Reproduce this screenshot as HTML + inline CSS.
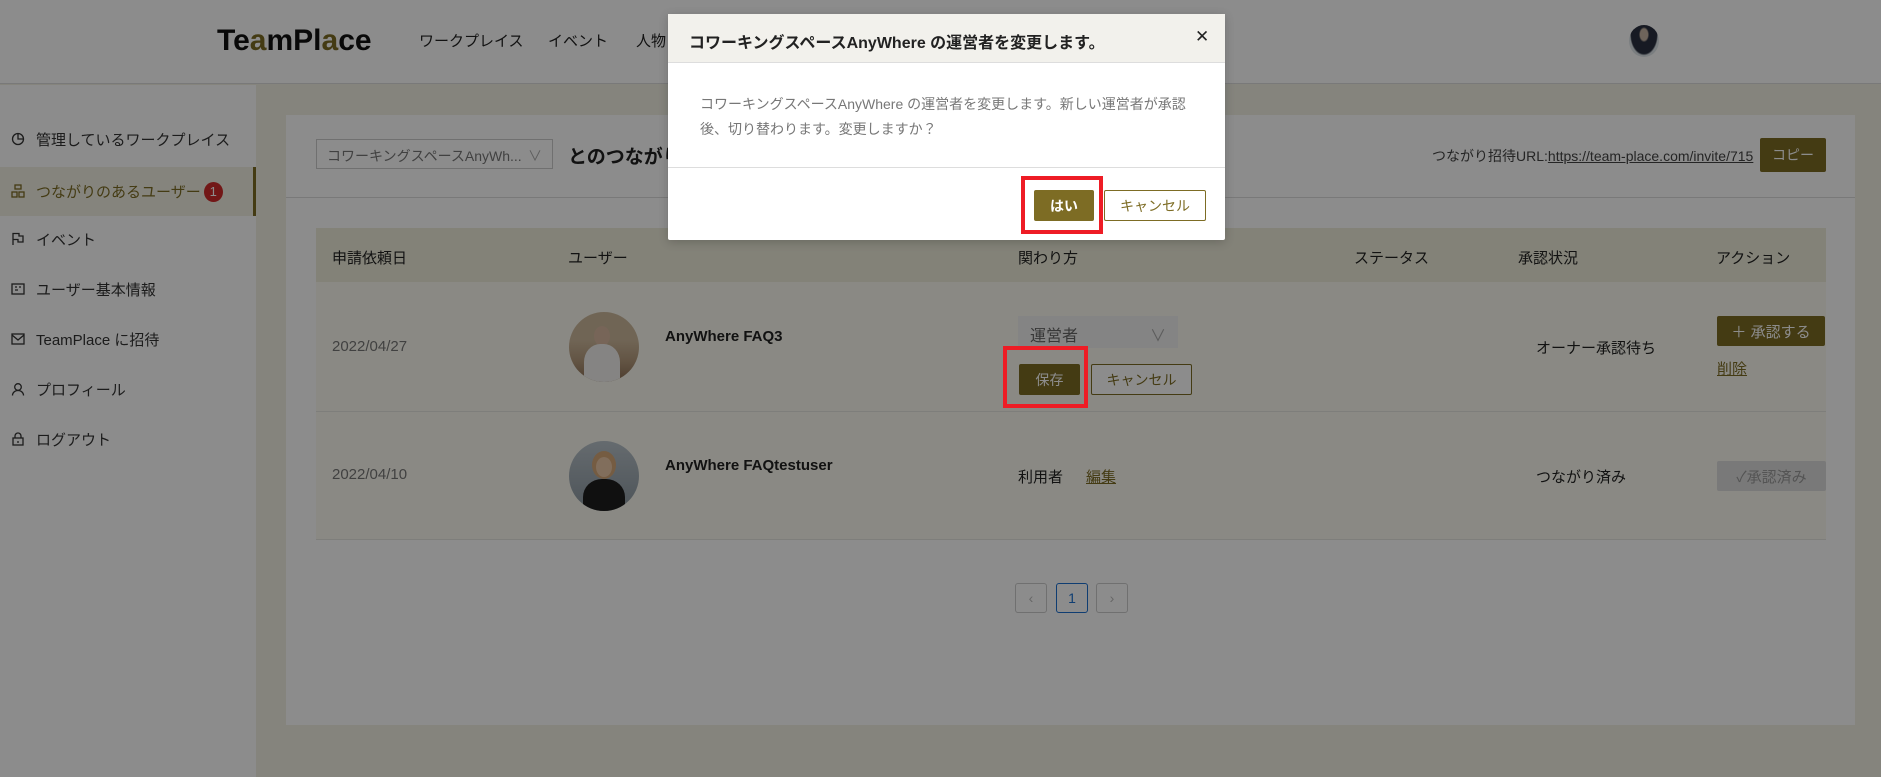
<!DOCTYPE html>
<html><head><meta charset="utf-8"><style>
*{box-sizing:border-box;margin:0;padding:0}
body{width:1881px;height:777px;position:relative;overflow:hidden;background:#f2f1e4;font-family:"Liberation Sans","Noto Sans CJK JP",sans-serif;color:#222}
.a{position:absolute}
.hdr{left:0;top:0;width:1881px;height:84px;background:#fff;border-bottom:1px solid #ddd}
.side{left:0;top:85px;width:256px;height:692px;background:#fff}
.si{position:absolute;left:0;width:256px;height:49px;font-size:15px;color:#333;display:flex;align-items:center;padding-left:36px}
.si svg{position:absolute;left:11px;top:17px}
.card{left:286px;top:115px;width:1569px;height:610px;background:#fff}
.btn{position:absolute;background:#7d6c24;color:#fff;font-size:14px;display:flex;align-items:center;justify-content:center;border-radius:2px}
.obtn{position:absolute;background:#fff;color:#7d6c24;border:1px solid #7d6c24;font-size:14px;display:flex;align-items:center;justify-content:center;border-radius:2px}
.th{font-size:15px;color:#222;top:247px}
.ov{left:0;top:0;width:1881px;height:777px;background:rgba(0,0,0,.45)}
.red{border:4px solid #ee1c25}
.pg{position:absolute;top:583px;width:32px;height:30px;border:1px solid #ccc;border-radius:3px;background:#fff;font-size:14px;color:#bbb;display:flex;align-items:center;justify-content:center}
</style></head><body>
<div class="a hdr"></div>
<div class="a" style="left:217px;top:24px;font-size:30px;font-weight:bold;letter-spacing:0px;color:#111">Te<span style="color:#7d6c24">a</span>mPl<span style="color:#7d6c24">a</span>ce</div>
<div class="a" style="left:419px;top:30px;font-size:15px">ワークプレイス</div>
<div class="a" style="left:548px;top:30px;font-size:15px">イベント</div>
<div class="a" style="left:636px;top:30px;font-size:15px">人物</div>
<div class="a" style="left:1629px;top:25px;width:30px;height:32px;border-radius:50%;background:radial-gradient(ellipse at 50% 30%,#c9b6a6 0 18%,#2a3140 24% 60%,#dfe5ea 66%)"></div>

<div class="a side">
 <div class="si" style="top:30px"><svg width="14" height="14" viewBox="0 0 14 14" fill="none" stroke="#333" stroke-width="1.3"><circle cx="7" cy="7" r="5.5"/><path d="M7 1.5V7H12.5"/></svg>管理しているワークプレイス</div>
 <div class="si" style="top:82px;background:#f2f1e4;color:#7d6c24;border-right:3px solid #7d6c24">
  <svg width="14" height="14" viewBox="0 0 14 14" fill="none" stroke="#7d6c24" stroke-width="1.3"><rect x="4" y="1" width="6" height="4"/><rect x="1" y="8" width="5" height="5"/><rect x="8" y="8" width="5" height="5"/></svg>つながりのあるユーザー<span style="display:inline-block;width:19px;height:20px;border-radius:50%;background:#d02a2a;color:#fff;font-size:13px;text-align:center;line-height:20px;margin-left:3px">1</span></div>
 <div class="si" style="top:130px"><svg width="14" height="14" viewBox="0 0 14 14" fill="none" stroke="#333" stroke-width="1.3"><path d="M2 13V1.5H8V4H12V10H7V7.5H2"/></svg>イベント</div>
 <div class="si" style="top:180px"><svg width="14" height="14" viewBox="0 0 14 14" fill="none" stroke="#333" stroke-width="1.3"><rect x="1" y="2" width="12" height="10"/><path d="M4 5h2M4 8h3M8 5h2"/></svg>ユーザー基本情報</div>
 <div class="si" style="top:230px"><svg width="14" height="14" viewBox="0 0 14 14" fill="none" stroke="#333" stroke-width="1.3"><rect x="1" y="2" width="12" height="10"/><path d="M1 3l6 5 6-5"/></svg>TeamPlace に招待</div>
 <div class="si" style="top:280px"><svg width="14" height="14" viewBox="0 0 14 14" fill="none" stroke="#333" stroke-width="1.3"><circle cx="7" cy="5" r="3.3"/><path d="M1.5 13.5c0-3 2.5-5 5.5-5s5.5 2 5.5 5"/></svg>プロフィール</div>
 <div class="si" style="top:330px"><svg width="14" height="14" viewBox="0 0 14 14" fill="none" stroke="#333" stroke-width="1.3"><rect x="2" y="6" width="10" height="7"/><path d="M4 6V4a3 3 0 016 0v2M7 9v2"/></svg>ログアウト</div>
</div>

<div class="a card"></div>
<div class="a" style="left:316px;top:139px;width:237px;height:30px;border:1px solid #ccc;font-size:14px;color:#777;padding:6px 10px;white-space:nowrap">コワーキングスペースAnyWh... <span style="float:right;color:#aaa">∨</span></div>
<div class="a" style="left:568px;top:142px;font-size:19px;font-weight:bold">とのつながり</div>
<div class="a" style="left:1432px;top:146px;font-size:14px;color:#444">つながり招待URL:<span style="text-decoration:underline">https://team-place.com/invite/715</span></div>
<div class="btn" style="left:1760px;top:138px;width:66px;height:34px">コピー</div>
<div class="a" style="left:286px;top:197px;width:1569px;height:1px;background:#ddd"></div>

<div class="a" style="left:316px;top:228px;width:1510px;height:54px;background:#eeedda"></div>
<div class="a th" style="left:332px">申請依頼日</div>
<div class="a th" style="left:568px">ユーザー</div>
<div class="a th" style="left:1018px">関わり方</div>
<div class="a th" style="left:1354px">ステータス</div>
<div class="a th" style="left:1518px">承認状況</div>
<div class="a th" style="left:1716px">アクション</div>

<div class="a" style="left:316px;top:282px;width:1510px;height:130px;background:#fbfaf0;border-bottom:1px solid #e5e5e0"></div>
<div class="a" style="left:332px;top:338px;font-size:15px;color:#777">2022/04/27</div>
<div class="a" style="left:569px;top:312px;width:70px;height:70px;border-radius:50%;overflow:hidden;background:linear-gradient(#cdb89c 0 40%,#b49a7c 70%,#8c6f55)">
 <div class="a" style="left:25px;top:14px;width:16px;height:20px;border-radius:50%;background:#d9b8a0"></div>
 <div class="a" style="left:15px;top:32px;width:36px;height:40px;border-radius:45% 45% 0 0;background:#f3f1ee"></div>
</div>
<div class="a" style="left:665px;top:328px;font-size:15px;font-weight:bold">AnyWhere FAQ3</div>
<div class="a" style="left:1018px;top:316px;width:160px;height:32px;background:#f0f0f0;font-size:16px;color:#666;padding:6px 12px">運営者<span style="float:right;color:#aaa">∨</span></div>
<div class="btn" style="left:1019px;top:364px;width:61px;height:31px">保存</div>
<div class="obtn" style="left:1091px;top:364px;width:101px;height:31px">キャンセル</div>
<div class="a" style="left:1536px;top:337px;font-size:15px">オーナー承認待ち</div>
<div class="btn" style="left:1717px;top:316px;width:108px;height:30px;font-size:15px">＋ 承認する</div>
<div class="a" style="left:1717px;top:358px;font-size:15px;color:#7d6c24;text-decoration:underline">削除</div>

<div class="a" style="left:316px;top:412px;width:1510px;height:128px;background:#fbfaf0;border-bottom:1px solid #e5e5e0"></div>
<div class="a" style="left:332px;top:466px;font-size:15px;color:#777">2022/04/10</div>
<div class="a" style="left:569px;top:441px;width:70px;height:70px;border-radius:50%;overflow:hidden;background:linear-gradient(#b9c3ca,#8d99a2)">
 <div class="a" style="left:23px;top:10px;width:24px;height:28px;border-radius:50%;background:#d6a878"></div>
 <div class="a" style="left:27px;top:16px;width:16px;height:20px;border-radius:50%;background:#ecc8a8"></div>
 <div class="a" style="left:14px;top:38px;width:42px;height:40px;border-radius:45% 45% 0 0;background:#1e1e1e"></div>
</div>
<div class="a" style="left:665px;top:457px;font-size:15px;font-weight:bold">AnyWhere FAQtestuser</div>
<div class="a" style="left:1018px;top:466px;font-size:15px">利用者</div>
<div class="a" style="left:1086px;top:466px;font-size:15px;color:#7d6c24;text-decoration:underline">編集</div>
<div class="a" style="left:1536px;top:466px;font-size:15px">つながり済み</div>
<div class="a" style="left:1717px;top:461px;width:109px;height:30px;background:#ddd;color:#999;font-size:15px;display:flex;align-items:center;justify-content:center;border-radius:2px">✓承認済み</div>

<div class="pg" style="left:1015px">‹</div>
<div class="pg" style="left:1056px;border-color:#1c6fd0;color:#1c6fd0">1</div>
<div class="pg" style="left:1096px">›</div>

<div class="a ov"></div>

<div class="a red" style="left:1003px;top:346px;width:85px;height:62px"></div>

<div class="a" style="left:668px;top:14px;width:557px;height:226px;background:#fff;border-radius:2px;box-shadow:0 2px 10px rgba(0,0,0,.2)">
 <div style="height:49px;background:#f2f1ec;border-bottom:1px solid #ddd;padding:15px 21px;font-size:16px;font-weight:bold;color:#222">コワーキングスペースAnyWhere の運営者を変更します。<span style="position:absolute;left:527px;top:13px;font-weight:normal;font-size:17px">✕</span></div>
 <div style="padding:29px 32px 0;font-size:14px;line-height:25px;color:#777;height:105px;border-bottom:1px solid #ddd">コワーキングスペースAnyWhere の運営者を変更します。新しい運営者が承認後、切り替わります。変更しますか？</div>
 <div class="btn" style="left:366px;top:176px;width:60px;height:31px;font-weight:bold">はい</div>
 <div class="obtn" style="left:436px;top:176px;width:102px;height:31px">キャンセル</div>
 <div class="a red" style="left:353px;top:162px;width:82px;height:58px"></div>
</div>
</body></html>
